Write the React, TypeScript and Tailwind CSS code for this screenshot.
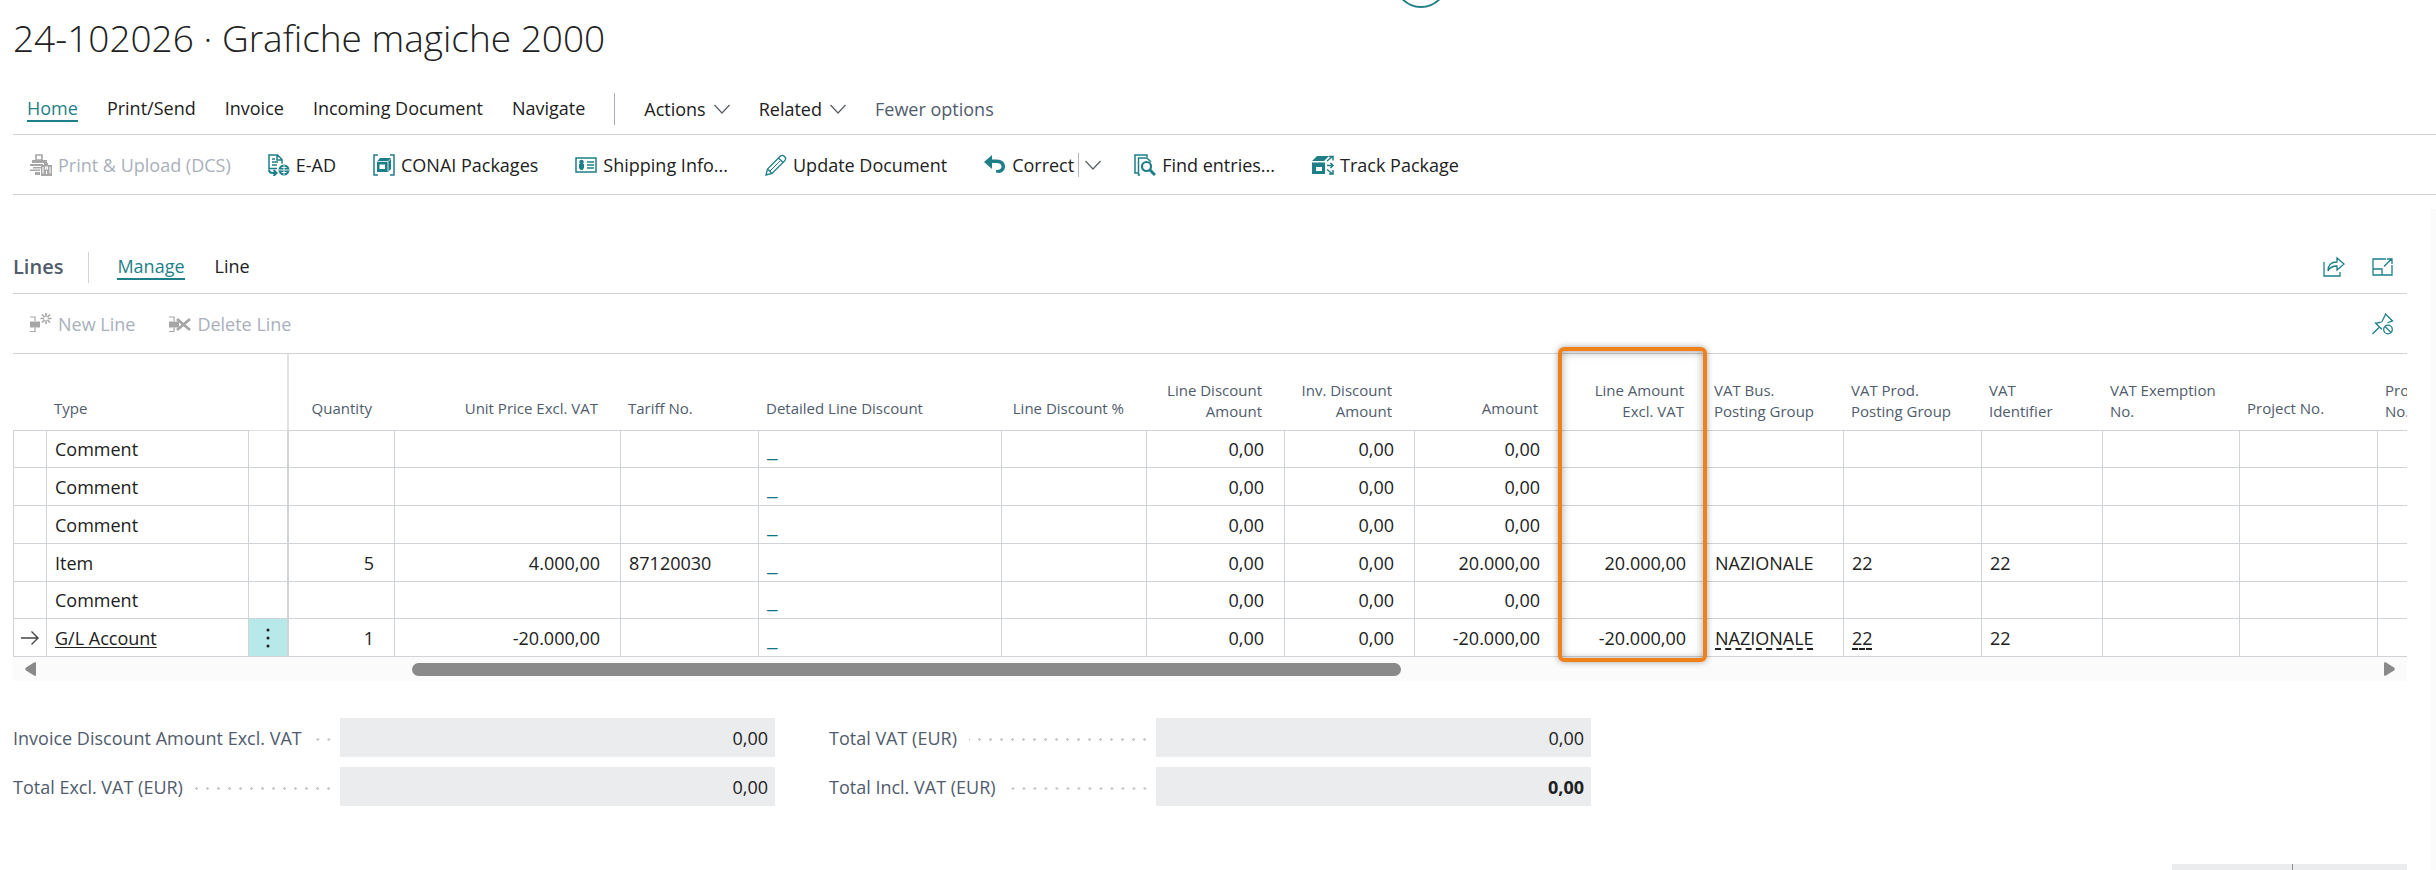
import type { ReactNode } from 'react';
import clsx from 'clsx';

const TABS = ['Home', 'Print/Send', 'Invoice', 'Incoming Document', 'Navigate'];

type Column = {
  key: string;
  label: string[];
  width: string;
  align?: 'right';
};

const COLUMNS: Column[] = [
  { key: 'quantity', label: ['Quantity'], width: 'w-[106px]', align: 'right' },
  { key: 'unitPrice', label: ['Unit Price Excl. VAT'], width: 'w-[226px]', align: 'right' },
  { key: 'tariff', label: ['Tariff No.'], width: 'w-[138px]' },
  { key: 'detail', label: ['Detailed Line Discount'], width: 'w-[243px]' },
  { key: 'discountPct', label: ['Line Discount %'], width: 'w-[145px]', align: 'right' },
  { key: 'lineDiscount', label: ['Line Discount', 'Amount'], width: 'w-[138px]', align: 'right' },
  { key: 'invDiscount', label: ['Inv. Discount', 'Amount'], width: 'w-[130px]', align: 'right' },
  { key: 'amount', label: ['Amount'], width: 'w-[146px]', align: 'right' },
  { key: 'lineAmount', label: ['Line Amount', 'Excl. VAT'], width: 'w-[146px]', align: 'right' },
  { key: 'vatBus', label: ['VAT Bus.', 'Posting Group'], width: 'w-[137px]' },
  { key: 'vatProd', label: ['VAT Prod.', 'Posting Group'], width: 'w-[138px]' },
  { key: 'vatId', label: ['VAT', 'Identifier'], width: 'w-[121px]' },
  { key: 'vatExempt', label: ['VAT Exemption', 'No.'], width: 'w-[137px]' },
  { key: 'project', label: ['Project No.'], width: 'w-[138px]' },
  { key: 'projectTask', label: ['Project Task', 'No.'], width: 'w-[138px]' },
];

type Row = { type: string; selected?: boolean; values: Record<string, string> };

const comment: Row = {
  type: 'Comment',
  values: { detail: '_', lineDiscount: '0,00', invDiscount: '0,00', amount: '0,00' },
};

const ROWS: Row[] = [
  comment,
  comment,
  comment,
  {
    type: 'Item',
    values: {
      quantity: '5',
      unitPrice: '4.000,00',
      tariff: '87120030',
      detail: '_',
      lineDiscount: '0,00',
      invDiscount: '0,00',
      amount: '20.000,00',
      lineAmount: '20.000,00',
      vatBus: 'NAZIONALE',
      vatProd: '22',
      vatId: '22',
    },
  },
  comment,
  {
    type: 'G/L Account',
    selected: true,
    values: {
      quantity: '1',
      unitPrice: '-20.000,00',
      detail: '_',
      lineDiscount: '0,00',
      invDiscount: '0,00',
      amount: '-20.000,00',
      lineAmount: '-20.000,00',
      vatBus: 'NAZIONALE',
      vatProd: '22',
      vatId: '22',
    },
  },
];

function Icon({ children, className }: { children: ReactNode; className?: string }) {
  return (
    <svg
      viewBox="0 0 22 22"
      aria-hidden="true"
      fill="none"
      stroke="currentColor"
      strokeWidth="1.5"
      className={clsx('size-[22px] shrink-0', className ?? 'text-[#1f7f88]')}
    >
      {children}
    </svg>
  );
}

function Chevron() {
  return (
    <svg viewBox="0 0 16 10" aria-hidden="true" className="h-[10px] w-4" fill="none" stroke="#5a5f66" strokeWidth="1.2">
      <path d="M0.5 1l7.5 8 7.500-8" />
    </svg>
  );
}

const icons = {
  print: (
    <Icon className="text-[#a6a6a6]">
      <path d="M6 1h6v5H6z" strokeWidth="1.6" />
      <path d="M2 6h15v3H2zM0 10h13v2H0zM3 13h8v1.500H3zM0 15.500h10V17H0zM5 18h5v3H5z" fill="currentColor" stroke="none" />
      <path d="M11 11h3V9h4v2h4v11H11z" fill="currentColor" stroke="none" />
      <path d="M13 13v6.500M20 13v6.500M15.500 13h2v2h-2zM16.500 17v3" stroke="#fff" strokeWidth="1.100" />
    </Icon>
  ),
  ead: (
    <Icon>
      <path d="M14 9.500V5.500L9.500 1H1v13.500h8M9 1v5h5M4 5h3M4 8h6M4 11h5" />
      <circle cx="16" cy="16" r="5.500" fill="currentColor" stroke="none" />
      <path d="M16 11v10M11 16h10M13.500 13.500h5M13.500 18.500h5" stroke="#fff" strokeWidth="0.900" />
      <path d="M1 15.500c0 2.500 1.500 3.500 4 3.500h3M5.500 16l3 3-3 3" strokeWidth="2" />
    </Icon>
  ),
  conai: (
    <Icon>
      <path d="M5 1H1v20h4M17 1h4v20h-4" />
      <path d="M4 7.500L7 4h11v11l-3 3H4z" fill="currentColor" stroke="none" />
      <path d="M4.500 7.500h10.500v10M15 7.500l3-3" stroke="#fff" strokeWidth="0.800" />
      <path d="M6.500 10.500H12V15H6.500z" fill="#fff" stroke="none" />
    </Icon>
  ),
  shipping: (
    <Icon>
      <path d="M1 4h20v14H1z" />
      <circle cx="6.500" cy="8" r="2.300" fill="currentColor" stroke="none" />
      <path d="M4 10h5v4l-1.500 2h-2L4 14z" fill="currentColor" stroke="none" />
      <path d="M12 8h7M12 11h7M12 14h7" />
    </Icon>
  ),
  update: (
    <Icon>
      <path d="M1 21l1.500-6L15 2.500c1.500-1.500 3-1.500 4.500 0s1.500 3 0 4.500L7 19.500zM2.500 15L7 19.500M13.500 4l4.500 4.500" strokeWidth="1.300" />
      <path d="M5 17L15.500 6.500" strokeWidth="1" />
    </Icon>
  ),
  correct: (
    <Icon>
      <path d="M0 8l8-7v4.500h4.500C18 5.500 21 8.500 21 12.500c0 3-2 6-6 6.500l-3-.5v-2.500c4 0 5.500-1.500 5.500-3.500s-1.500-3.500-5-3.500H8V15z" fill="currentColor" stroke="none" />
    </Icon>
  ),
  find: (
    <Icon>
      <path d="M13 3V1H1v18h3" />
      <path d="M6 21h-1.500V4H13l4 4" />
      <circle cx="12.500" cy="12.500" r="4.500" strokeWidth="2.200" />
      <path d="M16 16l5 5" strokeWidth="3" />
    </Icon>
  ),
  track: (
    <Icon>
      <path d="M0 7l5-5h12l-5 5zM0 8.500h13V20H0z" fill="currentColor" stroke="none" />
      <path d="M4 13h6v4H4z" fill="#fff" stroke="none" />
      <path d="M15 7l5-4M17 2.500h4v4M15 11.500h6M18.500 9l2.500 2.500-2.500 2.500M15 15.500l5 4M17 20h4v-4" />
    </Icon>
  ),
};

function RowMark() {
  return (
    <>
      <path d="M0 4h5v4M0 18.500h5v-4" strokeWidth="1.200" />
      <path d="M0 8.500h10v6H0z" fill="currentColor" stroke="none" />
    </>
  );
}

function ActionButton({ icon, label, disabled }: { icon: ReactNode; label: string; disabled?: boolean }) {
  return (
    <button disabled={disabled} className={clsx('flex items-center gap-1.5', disabled && 'text-[#a9b0bb]')}>
      {icon}
      {label}
    </button>
  );
}

function HeaderCell({ label, right }: { label: string[]; right?: boolean }) {
  return (
    <th
      scope="col"
      className={clsx(
        'border-b border-[#d0d3d8] align-bottom text-[15px] leading-[21px] font-normal whitespace-nowrap text-[#505c6d]',
        right ? 'pr-[23px] text-right' : 'pl-[7px] text-left',
        label.length > 1 ? 'pb-2' : 'pb-[11px]',
      )}
    >
      {label.map((line) => (
        <span key={line} className="block">
          {line}
        </span>
      ))}
    </th>
  );
}

function CellValue({ column, row }: { column: string; row: Row }) {
  const value = row.values[column];
  if (!value) return null;
  if (column === 'detail') {
    return (
      <a href="#detail" className="text-[24px] leading-6 text-[#0f7780]">
        {value}
      </a>
    );
  }
  if (row.selected && (column === 'vatBus' || column === 'vatProd')) {
    return (
      <span className="underline decoration-dashed decoration-2 underline-offset-4">{value}</span>
    );
  }
  return <>{value}</>;
}

function LinesTable() {
  const cell = 'border-r border-b border-[#d0d3d8] p-0';
  return (
    <table className="w-full table-fixed border-separate border-spacing-0 leading-6 whitespace-nowrap">
      <colgroup>
        <col className="w-[34px]" />
        <col className="w-[202px]" />
        <col className="w-10" />
        {COLUMNS.map((c) => (
          <col key={c.key} className={c.width} />
        ))}
      </colgroup>
      <thead>
        <tr className="h-[77px]">
          <td className="border-b border-[#d0d3d8]" />
          <HeaderCell label={['Type']} />
          <td className="border-r-2 border-b border-[#dfe1e4]" />
          {COLUMNS.map((c) => (
            <HeaderCell key={c.key} label={c.label} right={c.align === 'right'} />
          ))}
        </tr>
      </thead>
      <tbody>
        {ROWS.map((row, i) => (
          <tr key={i} className="h-[38px] nth-[4n+1]:h-[37px]">
            <td className={clsx(cell, 'border-l')}>
              {row.selected && (
                <svg viewBox="0 0 18 14" aria-hidden="true" className="mx-auto h-[14px] w-[18px]" fill="none" stroke="#444" strokeWidth="1.400">
                  <path d="M0 7h17M10.500 0.500L17 7l-6.500 6.500" />
                </svg>
              )}
            </td>
            <td className={clsx(cell, 'pl-2', row.selected && 'underline underline-offset-2')}>{row.type}</td>
            <td className={clsx('border-r-2 border-b border-[#d0d3d8] p-0', row.selected && 'bg-[#b7e8ea]')}>
              {row.selected && (
                <button aria-label="Show more options" className="flex h-6 w-full items-center justify-center">
                  <svg viewBox="0 0 4 20" className="h-5 w-1" fill="#212121">
                    <circle cx="2" cy="2" r="1.500" />
                    <circle cx="2" cy="10" r="1.500" />
                    <circle cx="2" cy="18" r="1.500" />
                  </svg>
                </button>
              )}
            </td>
            {COLUMNS.map((c) => (
              <td key={c.key} className={clsx(cell, c.align === 'right' ? 'pr-5 text-right' : 'pl-2')}>
                <CellValue column={c.key} row={row} />
              </td>
            ))}
          </tr>
        ))}
      </tbody>
    </table>
  );
}

function TotalField({ id, label, bold }: { id: string; label: string; bold?: boolean }) {
  return (
    <div className="flex items-center">
      <label htmlFor={id} className="flex w-[327px] items-center gap-3 whitespace-nowrap text-[#505c6d]">
        {label}
        <span className="mt-1 mr-1.5 h-[3px] flex-1 bg-[radial-gradient(circle,#c3c6ca_1px,transparent_1.5px)] bg-[length:11px_3px] bg-right bg-repeat-x" />
      </label>
      <input
        id={id}
        readOnly
        defaultValue="0,00"
        className={clsx('h-[39px] w-[435px] bg-[#ebecee] pr-[7px] text-right outline-none', bold && 'font-bold')}
      />
    </div>
  );
}

export default function App() {
  return (
    <div className="relative flex h-screen flex-col overflow-hidden bg-white pl-[13px] font-['Open_Sans','Noto_Sans',sans-serif] text-[18px] leading-6 text-[#212121]">
      <div className="absolute -top-[46px] left-[1394px] size-[54px] rounded-full border-2 border-[#1f7f88]" />

      <h1 className="pt-[10px] text-[37px] leading-[56px] font-light">24-102026 · Grafiche magiche 2000</h1>

      <nav className="mt-[18px] flex h-[51px] items-center gap-[29px] border-b border-[#d0d3d8] pl-[14px]">
        {TABS.map((tab) => (
          <button
            key={tab}
            className={clsx('border-b-2', tab === 'Home' ? 'border-[#1f7f88] text-[#1f7f88]' : 'border-transparent')}
          >
            {tab}
          </button>
        ))}
        <span className="h-8 w-px bg-[#a9adb3]" />
        <button className="flex items-center gap-2">
          Actions
          <Chevron />
        </button>
        <button className="flex items-center gap-2">
          Related
          <Chevron />
        </button>
        <button className="text-[#505c6d]">Fewer options</button>
      </nav>

      <div className="flex h-[60px] items-center gap-[37px] border-b border-[#d0d3d8] pl-[17px]">
        <ActionButton icon={icons.print} label="Print & Upload (DCS)" disabled />
        <ActionButton icon={icons.ead} label="E-AD" />
        <ActionButton icon={icons.conai} label="CONAI Packages" />
        <ActionButton icon={icons.shipping} label="Shipping Info..." />
        <ActionButton icon={icons.update} label="Update Document" />
        <div className="-mr-1 flex items-center">
          <ActionButton icon={icons.correct} label="Correct" />
          <button aria-label="More correct options" className="ml-1 flex h-6 items-center border-l border-[#b5b8bd] pl-1.5">
            <Chevron />
          </button>
        </div>
        <ActionButton icon={icons.find} label="Find entries..." />
        <ActionButton icon={icons.track} label="Track Package" />
      </div>

      <section className="mt-[46px] mr-[29px]">
        <div className="flex h-[53px] items-center border-b border-[#d0d3d8]">
          <h2 className="text-[20px] font-semibold text-[#505c6d]">Lines</h2>
          <span className="mr-[28px] ml-[25px] h-[31px] w-px bg-[#d0d3d8]" />
          <button className="border-b-2 border-[#1f7f88] text-[#1f7f88]">Manage</button>
          <button className="ml-[30px] border-b-2 border-transparent">Line</button>
          <div className="ml-auto flex items-center gap-[27px] pr-[13px]">
            <button aria-label="Share">
              <Icon>
                <path d="M1 6v14h16v-4" strokeWidth="1.300" />
                <path d="M5 15c0-6 3-9 9-9V2l7 6-7 6v-4c-4 0-7 1-9 5z" strokeWidth="1.300" />
              </Icon>
            </button>
            <button aria-label="Focus mode">
              <Icon>
                <path d="M14 3H1v16h19V9M1 13h9v6M12 10.500L19.500 3M15 3h5v5" strokeWidth="1.300" />
              </Icon>
            </button>
          </div>
        </div>

        <div className="flex h-[60px] items-center gap-[34px] border-b border-[#d0d3d8] pl-[17px]">
          <ActionButton
            disabled
            label="New Line"
            icon={
              <Icon className="text-[#a6a6a6]">
                <RowMark />
                <path d="M16 0v11M10.500 5.500h11M12 1.500l8 8M20 1.500l-8 8" strokeWidth="1.600" />
                <circle cx="16" cy="5.500" r="2" fill="#fff" stroke="none" />
              </Icon>
            }
          />
          <ActionButton
            disabled
            label="Delete Line"
            icon={
              <Icon className="text-[#a6a6a6]">
                <RowMark />
                <path d="M8 6l13 11M21 6L8 17" strokeWidth="2.800" />
              </Icon>
            }
          />
          <button aria-label="Unpin" className="mr-[13px] ml-auto">
            <Icon>
              <path d="M0.500 21L7 14.500M3 9.500l7 7M4 10.500c2-1.500 5-.5 6-2l3-6 .5-1.500L20.500 8l-2 .5-3 1.500" strokeWidth="1.300" />
              <circle cx="16" cy="16.500" r="4.300" strokeWidth="1.300" />
              <path d="M13 13.500l6 6" strokeWidth="1.300" />
            </Icon>
          </button>
        </div>

        <div className="relative">
          <div className="overflow-hidden">
            <LinesTable />
          </div>
          {/* highlighted column frame */}
          <div className="pointer-events-none absolute -top-[7px] left-[1545px] h-[315px] w-[149px] rounded-md border-4 border-[#f08019] shadow-[0_0_6px_rgba(0,0,0,0.35),inset_0_1px_8px_rgba(0,0,0,0.35)]" />
        </div>

        <div className="flex h-6 items-center bg-[#fbfbfb] px-3">
          <svg viewBox="0 0 11 14" aria-hidden="true" className="h-[14px] w-[11px]" fill="#8a8a8a">
            <path d="M11 1v12c0 1-1 1-2 .5L1 8.500c-1-1-1-2 0-3L9 .5c1-.5 2-.5 2 .5z" />
          </svg>
          <div className="mr-auto ml-[376px] h-[13px] w-[989px] rounded-full bg-[#8a8a8a]" />
          <svg viewBox="0 0 11 14" aria-hidden="true" className="h-[14px] w-[11px]" fill="#8a8a8a">
            <path d="M0 1v12c0 1 1 1 2 .5l8-5c1-1 1-2 0-3L2 .5C1 0 0 0 0 1z" />
          </svg>
        </div>

        <div className="mt-[37px] grid grid-cols-[762px_762px] gap-x-[54px] gap-y-[10px]">
          <TotalField id="invoice-discount" label="Invoice Discount Amount Excl. VAT" />
          <TotalField id="total-vat" label="Total VAT (EUR)" />
          <TotalField id="total-excl" label="Total Excl. VAT (EUR)" />
          <TotalField id="total-incl" label="Total Incl. VAT (EUR)" bold />
        </div>
      </section>

      <div className="mt-auto mr-[29px] flex h-1.5 w-[235px] shrink-0 self-end bg-[#ebecee]">
        <span className="ml-[120px] w-px bg-[#8a8d91]" />
      </div>
      <div className="absolute top-[209px] right-0 bottom-0 w-[5px] bg-[#fbfbfb]" />
    </div>
  );
}
